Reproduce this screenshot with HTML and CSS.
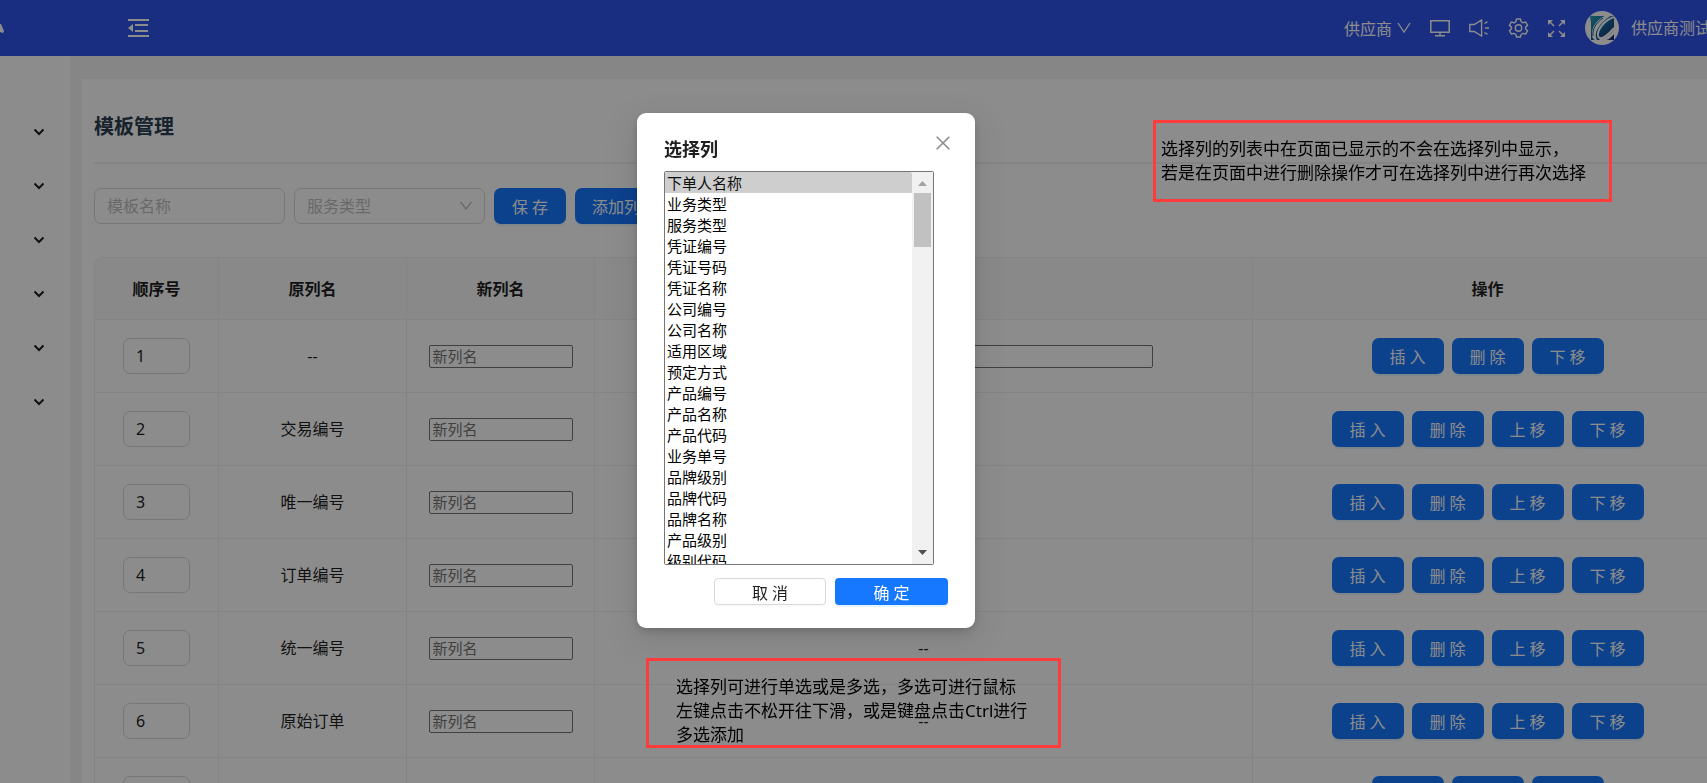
FILE: index.html
```html
<!DOCTYPE html>
<html lang="zh-CN">
<head>
    <meta charset="UTF-8">
    <title>模板管理</title>
    <link rel="stylesheet" href="styles.css">
</head>
<body>
    <header class="topbar">
        <svg class="logo" viewBox="0 0 4 12" width="4" height="12"><path d="M0 2l1 0 3 7-1 2-3-1z" fill="#fff"/></svg>
        <button class="icon-btn fold" aria-label="收起菜单">
            <svg width="21" height="18" viewBox="0 0 21 18" fill="#fff"><path d="M0 0h21v2H0zM7 5h13v2H7zM7 11h13v2H7zM0 16h21v2H0zM0 9l5-4v8z"/></svg>
        </button>
        <div class="tools">
            <button class="role">供应商
                <svg width="14" height="12" viewBox="0 0 14 12" fill="none" stroke="#fff" stroke-width="1.3"><path d="M1 1l6 9 6-9"/></svg>
            </button>
            <button class="icon-btn" aria-label="大屏">
                <svg width="20" height="18" viewBox="0 0 20 18" fill="none" stroke="#fff" stroke-width="1.5"><path d="M.8 1.8h18.4v11.4H.8zM10 13v3.500M5 16.800h10"/></svg>
            </button>
            <button class="icon-btn" aria-label="公告">
                <svg width="20" height="18" viewBox="0 0 20 18" fill="none" stroke="#fff" stroke-width="1.4"><path d="M.8 5.500h4.500L12.600 1v16L5.300 12.500H.8zM16 9h4M15.500 4.500l3-1.800M15.500 13.500l3 1.800"/></svg>
            </button>
            <button class="icon-btn" aria-label="设置">
                <svg width="21" height="20" viewBox="0 0 20 20" fill="none" stroke="#fff" stroke-width="1.4" stroke-linejoin="round"><path d="M8 1h4l.6 2.600 2 1.200 2.500-.9 2 3.500-2 1.700v1.900l2 1.700-2 3.500-2.500-.9-2 1.200L12 19H8l-.6-2.500-2-1.200-2.500.9-2-3.500 2-1.700V9.100l-2-1.700 2-3.500 2.500.9 2-1.200z"/><circle cx="10" cy="10" r="3.2"/></svg>
            </button>
            <button class="icon-btn" aria-label="全屏">
                <svg width="17" height="17" viewBox="0 0 17 17" fill="#fff" stroke="#fff" stroke-width="1.5"><path d="M1 1l5 5M16 1l-5 5M1 16l5-5M16 16l-5-5"/><path stroke="none" d="M0 0h5L0 5zM17 0h-5l5 5zM0 17h5l-5-5zM17 17h-5l5-5z"/></svg>
            </button>
            <a class="user" href="#">
                <svg width="34" height="34" viewBox="0 0 34 34">
                    <defs>
                        <linearGradient id="brand" x1="0" y1="0" x2="1" y2="1">
                            <stop offset="0" stop-color="#2aa5b8"/>
                            <stop offset=".5" stop-color="#14609a"/>
                            <stop offset="1" stop-color="#1c2b6b"/>
                        </linearGradient>
                    </defs>
                    <circle cx="17" cy="17" r="17" fill="#fff"/>
                    <path d="M5 5h24v24H6V12z" fill="url(#brand)"/>
                    <path d="M24 3C15 6 6 14 7 24c0 3 2 5 4 6l1-1c-4-7 2-17 15-25z" fill="#fff"/>
                    <path d="M18 7C11 12 7 18 8 25" fill="none" stroke="#14609a" stroke-width="1"/>
                    <path d="M29 6C20 9 12 18 13 25c1 4 7 3 16-8" fill="none" stroke="#fff" stroke-width="2"/>
                    <path d="M14 28c6 0 11-4 16-11v5c-4 5-8 8-14 8z" fill="#fff"/>
                </svg>
                <span>供应商测试账号</span>
            </a>
        </div>
    </header>

    <div class="layout">
        <nav class="sidebar" aria-label="菜单">
            <button class="menu-item" aria-label="展开"><svg width="12" height="8" viewBox="0 0 12 8"><path d="M1.500 1.500L6 6l4.500-4.500"/></svg></button>
            <button class="menu-item" aria-label="展开"><svg width="12" height="8" viewBox="0 0 12 8"><path d="M1.500 1.500L6 6l4.500-4.500"/></svg></button>
            <button class="menu-item" aria-label="展开"><svg width="12" height="8" viewBox="0 0 12 8"><path d="M1.500 1.500L6 6l4.500-4.500"/></svg></button>
            <button class="menu-item" aria-label="展开"><svg width="12" height="8" viewBox="0 0 12 8"><path d="M1.500 1.500L6 6l4.500-4.500"/></svg></button>
            <button class="menu-item" aria-label="展开"><svg width="12" height="8" viewBox="0 0 12 8"><path d="M1.500 1.500L6 6l4.500-4.500"/></svg></button>
            <button class="menu-item" aria-label="展开"><svg width="12" height="8" viewBox="0 0 12 8"><path d="M1.500 1.500L6 6l4.500-4.500"/></svg></button>
        </nav>

        <main class="panel">
            <h1>模板管理</h1>

            <form class="filters">
                <input type="text" class="field" placeholder="模板名称" aria-label="模板名称">
                <div class="select-wrap">
                    <select class="field" aria-label="服务类型">
                        <option>服务类型</option>
                    </select>
                    <svg width="14" height="10" viewBox="0 0 14 10"><path d="M1.500 1L7 8l5.500-7"/></svg>
                </div>
                <button type="button" class="btn">保 存</button>
                <button type="button" class="btn">添加列</button>
            </form>

            <table class="grid">
                <colgroup>
                    <col class="col-order">
                    <col class="col-name">
                    <col class="col-name">
                    <col>
                    <col class="col-action">
                </colgroup>
                <thead>
                    <tr><th>顺序号</th><th>原列名</th><th>新列名</th><th></th><th>操作</th></tr>
                </thead>
                <tbody>
                    <tr>
                        <td><input class="order" value="1" aria-label="顺序号"></td>
                        <td>--</td>
                        <td><input class="rename" placeholder="新列名" aria-label="新列名"></td>
                        <td><input class="rename wide" aria-label="默认值"></td>
                        <td><div class="actions"><button class="btn">插 入</button><button class="btn">删 除</button><button class="btn">下 移</button></div></td>
                    </tr>
                    <tr>
                        <td><input class="order" value="2" aria-label="顺序号"></td>
                        <td>交易编号</td>
                        <td><input class="rename" placeholder="新列名" aria-label="新列名"></td>
                        <td>--</td>
                        <td><div class="actions"><button class="btn">插 入</button><button class="btn">删 除</button><button class="btn">上 移</button><button class="btn">下 移</button></div></td>
                    </tr>
                    <tr>
                        <td><input class="order" value="3" aria-label="顺序号"></td>
                        <td>唯一编号</td>
                        <td><input class="rename" placeholder="新列名" aria-label="新列名"></td>
                        <td>--</td>
                        <td><div class="actions"><button class="btn">插 入</button><button class="btn">删 除</button><button class="btn">上 移</button><button class="btn">下 移</button></div></td>
                    </tr>
                    <tr>
                        <td><input class="order" value="4" aria-label="顺序号"></td>
                        <td>订单编号</td>
                        <td><input class="rename" placeholder="新列名" aria-label="新列名"></td>
                        <td>--</td>
                        <td><div class="actions"><button class="btn">插 入</button><button class="btn">删 除</button><button class="btn">上 移</button><button class="btn">下 移</button></div></td>
                    </tr>
                    <tr>
                        <td><input class="order" value="5" aria-label="顺序号"></td>
                        <td>统一编号</td>
                        <td><input class="rename" placeholder="新列名" aria-label="新列名"></td>
                        <td>--</td>
                        <td><div class="actions"><button class="btn">插 入</button><button class="btn">删 除</button><button class="btn">上 移</button><button class="btn">下 移</button></div></td>
                    </tr>
                    <tr>
                        <td><input class="order" value="6" aria-label="顺序号"></td>
                        <td>原始订单</td>
                        <td><input class="rename" placeholder="新列名" aria-label="新列名"></td>
                        <td>--</td>
                        <td><div class="actions"><button class="btn">插 入</button><button class="btn">删 除</button><button class="btn">上 移</button><button class="btn">下 移</button></div></td>
                    </tr>
                    <tr>
                        <td><input class="order" aria-label="顺序号"></td>
                        <td></td>
                        <td></td>
                        <td></td>
                        <td><div class="actions"><button class="btn" aria-label="插入"></button><button class="btn" aria-label="删除"></button><button class="btn" aria-label="上移"></button></div></td>
                    </tr>
                </tbody>
            </table>
        </main>
    </div>

    <div class="mask"></div>

    <div class="modal" role="dialog" aria-labelledby="modal-title">
        <div class="modal-head">
            <h2 id="modal-title">选择列</h2>
            <button class="close" aria-label="关闭">
                <svg width="14" height="14" viewBox="0 0 14 14"><path d="M.7.7l12.600 12.600M13.300.7L.7 13.300"/></svg>
            </button>
        </div>
        <div class="listbox">
            <select class="columns" multiple aria-labelledby="modal-title">
                <option selected>下单人名称</option>
                <option>业务类型</option>
                <option>服务类型</option>
                <option>凭证编号</option>
                <option>凭证号码</option>
                <option>凭证名称</option>
                <option>公司编号</option>
                <option>公司名称</option>
                <option>适用区域</option>
                <option>预定方式</option>
                <option>产品编号</option>
                <option>产品名称</option>
                <option>产品代码</option>
                <option>业务单号</option>
                <option>品牌级别</option>
                <option>品牌代码</option>
                <option>品牌名称</option>
                <option>产品级别</option>
                <option>级别代码</option>
            </select>
            <div class="scrollbar" aria-hidden="true">
                <svg width="21" height="21" viewBox="0 0 21 21"><path d="M6 14l4.500-5 4.500 5z" fill="#a3a3a3"/></svg>
                <div class="thumb"></div>
                <svg width="21" height="21" viewBox="0 0 21 21"><path d="M6 7l4.500 5L15 7z" fill="#505050"/></svg>
            </div>
        </div>
        <div class="modal-foot">
            <button class="btn small plain">取 消</button>
            <button class="btn small">确 定</button>
        </div>
    </div>

    <p class="note note-top">选择列的列表中在页面已显示的不会在选择列中显示，<br>若是在页面中进行删除操作才可在选择列中进行再次选择</p>
    <p class="note note-bottom">选择列可进行单选或是多选，多选可进行鼠标<br>左键点击不松开往下滑，或是键盘点击Ctrl进行<br>多选添加</p>
</body>
</html>
```
FILE: styles.css
```css
* {
    box-sizing: border-box;
}

body {
    margin: 0;
    height: 100vh;
    overflow: hidden;
    position: relative;
    display: flex;
    flex-direction: column;
    background-color: #f5f5f5;
    color: #1f1f1f;
    font-family: "Noto Sans", "Noto Sans CJK SC", sans-serif;
    font-size: 16px;
    line-height: 24px;
}

button, input, select {
    font-family: inherit;
    font-size: 16px;
}

button {
    cursor: pointer;
}

svg {
    display: block;
    flex: none;
}

/* top bar */
.topbar {
    flex: none;
    height: 56px;
    display: flex;
    align-items: center;
    overflow: hidden;
    background-color: #2f54eb;
    color: #fff;
}

.icon-btn, .role {
    border: 0;
    padding: 0;
    background: none;
    color: inherit;
}

.fold {
    margin-left: 124px;
}

.tools {
    flex: none;
    display: flex;
    align-items: center;
    gap: 19px;
    margin-left: auto;
    margin-right: -36px;
}

.role {
    display: flex;
    align-items: center;
    gap: 5px;
}

.user {
    display: flex;
    align-items: center;
    gap: 12px;
    margin-left: 1px;
    color: inherit;
    text-decoration: none;
    white-space: nowrap;
}

/* page */
.layout {
    flex: 1;
    min-height: 0;
    display: flex;
    overflow: hidden;
}

.sidebar {
    flex: none;
    width: 70px;
    padding-top: 49px;
    background-color: #fff;
}

.menu-item {
    display: flex;
    align-items: center;
    width: 100%;
    height: 54px;
    padding: 0 0 0 33px;
    border: 0;
    background: none;
}

.menu-item path {
    fill: none;
    stroke: #1f1f1f;
    stroke-width: 2;
}

.panel {
    flex: 1;
    margin: 23px -28px 0 12px;
    padding: 0 12px;
    background-color: #fff;
}

h1 {
    margin: 0 0 24px;
    padding: 33px 0 20px;
    border-bottom: 2px solid #f0f0f0;
    color: #2c3e50;
    font-size: 20px;
    line-height: 30px;
}

.filters {
    display: flex;
    gap: 9px;
    margin-bottom: 33px;
}

.field {
    width: 191px;
    height: 36px;
    padding: 0 12px;
    border: 1px solid #d9d9d9;
    border-radius: 7px;
    background: none;
    color: #bfbfbf;
    appearance: none;
}

.field::placeholder {
    color: #bfbfbf;
}

.select-wrap {
    position: relative;
}

.select-wrap svg {
    position: absolute;
    top: 13px;
    right: 12px;
    pointer-events: none;
}

.select-wrap path {
    fill: none;
    stroke: #bfbfbf;
    stroke-width: 1.3;
}

.btn {
    height: 36px;
    min-width: 72px;
    padding: 0 17px;
    border: 0;
    border-radius: 7px;
    background-color: #1677ff;
    box-shadow: 0 2px 0 rgba(5, 145, 255, 0.1);
    color: #fff;
    white-space: nowrap;
}

/* table */
.grid {
    width: 100%;
    table-layout: fixed;
    border-collapse: separate;
    border-spacing: 0;
    border-top: 1px solid #f0f0f0;
    border-left: 1px solid #f0f0f0;
    border-radius: 9px 0 0 0;
    text-align: center;
}

.grid .col-order {
    width: 124px;
}

.grid .col-name {
    width: 188px;
}

.grid .col-action {
    width: 470px;
}

.grid th, .grid td {
    padding: 0 16px;
    border-right: 1px solid #f0f0f0;
    border-bottom: 1px solid #f0f0f0;
}

.grid th {
    height: 62px;
    background-color: #fafafa;
    font-weight: 600;
}

.grid th:first-child {
    border-radius: 9px 0 0 0;
}

.grid td {
    height: 73px;
}

.order {
    width: 67px;
    height: 36px;
    padding: 0 12px;
    border: 1px solid #d9d9d9;
    border-radius: 7px;
    color: #1f1f1f;
}

.rename {
    width: 144px;
    height: 23px;
    padding: 1px 3px;
    border: 1px solid #767676;
    border-radius: 2px;
    font-size: 15px;
}

.rename.wide {
    width: 459px;
}

.actions {
    display: flex;
    justify-content: center;
    gap: 8px;
}

/* dialog */
.mask {
    position: fixed;
    inset: 0;
    background-color: rgba(0, 0, 0, 0.45);
}

.modal {
    position: absolute;
    top: 113px;
    left: 637px;
    width: 338px;
    padding: 23px 27px;
    border-radius: 9px;
    background-color: #fff;
    box-shadow: 0 7px 18px rgba(0, 0, 0, 0.08), 0 3px 7px rgba(0, 0, 0, 0.12), 0 10px 32px 9px rgba(0, 0, 0, 0.05);
}

.modal-head {
    display: flex;
    justify-content: space-between;
    align-items: flex-start;
    margin-bottom: 9px;
}

.modal h2 {
    margin: 0;
    font-size: 18px;
    line-height: 26px;
}

.close {
    padding: 0;
    margin-right: -2px;
    border: 0;
    background: none;
}

.close path {
    stroke: #8c8c8c;
    stroke-width: 1.6;
}

.listbox {
    display: flex;
    width: 270px;
    height: 394px;
    border: 1px solid #767676;
    border-radius: 2px;
}

.columns {
    flex: 1;
    height: 100%;
    padding: 0;
    border: 0;
    outline: 0;
    background-color: #fff;
    color: #000;
    font-size: 15px;
    scrollbar-width: none;
}

.columns option {
    height: 21px;
    min-height: 21px;
    padding: 0 2px;
    line-height: 21px;
}

.scrollbar {
    flex: none;
    display: flex;
    flex-direction: column;
    width: 21px;
    background-color: #f1f1f1;
}

.scrollbar svg:last-child {
    margin-top: auto;
}

.thumb {
    height: 54px;
    margin: 0 2px;
    background-color: #c1c1c1;
}

.modal-foot {
    display: flex;
    justify-content: flex-end;
    gap: 9px;
    margin-top: 13px;
}

.btn.small {
    width: 113px;
    height: 27px;
    border-radius: 4px;
}

.btn.plain {
    width: 112px;
    border: 1px solid #d9d9d9;
    background-color: #fff;
    box-shadow: 0 2px 0 rgba(0, 0, 0, 0.02);
    color: #1f1f1f;
}

/* notes on top of the page */
.note {
    position: absolute;
    margin: 0;
    border: 3px solid #ff3b3b;
    color: #000;
    font-size: 17px;
    line-height: 24px;
    white-space: nowrap;
}

.note-top {
    top: 120px;
    left: 1153px;
    width: 459px;
    padding: 14px 5px;
}

.note-bottom {
    top: 658px;
    left: 646px;
    width: 415px;
    height: 90px;
    padding: 14px 27px 0;
}
```
